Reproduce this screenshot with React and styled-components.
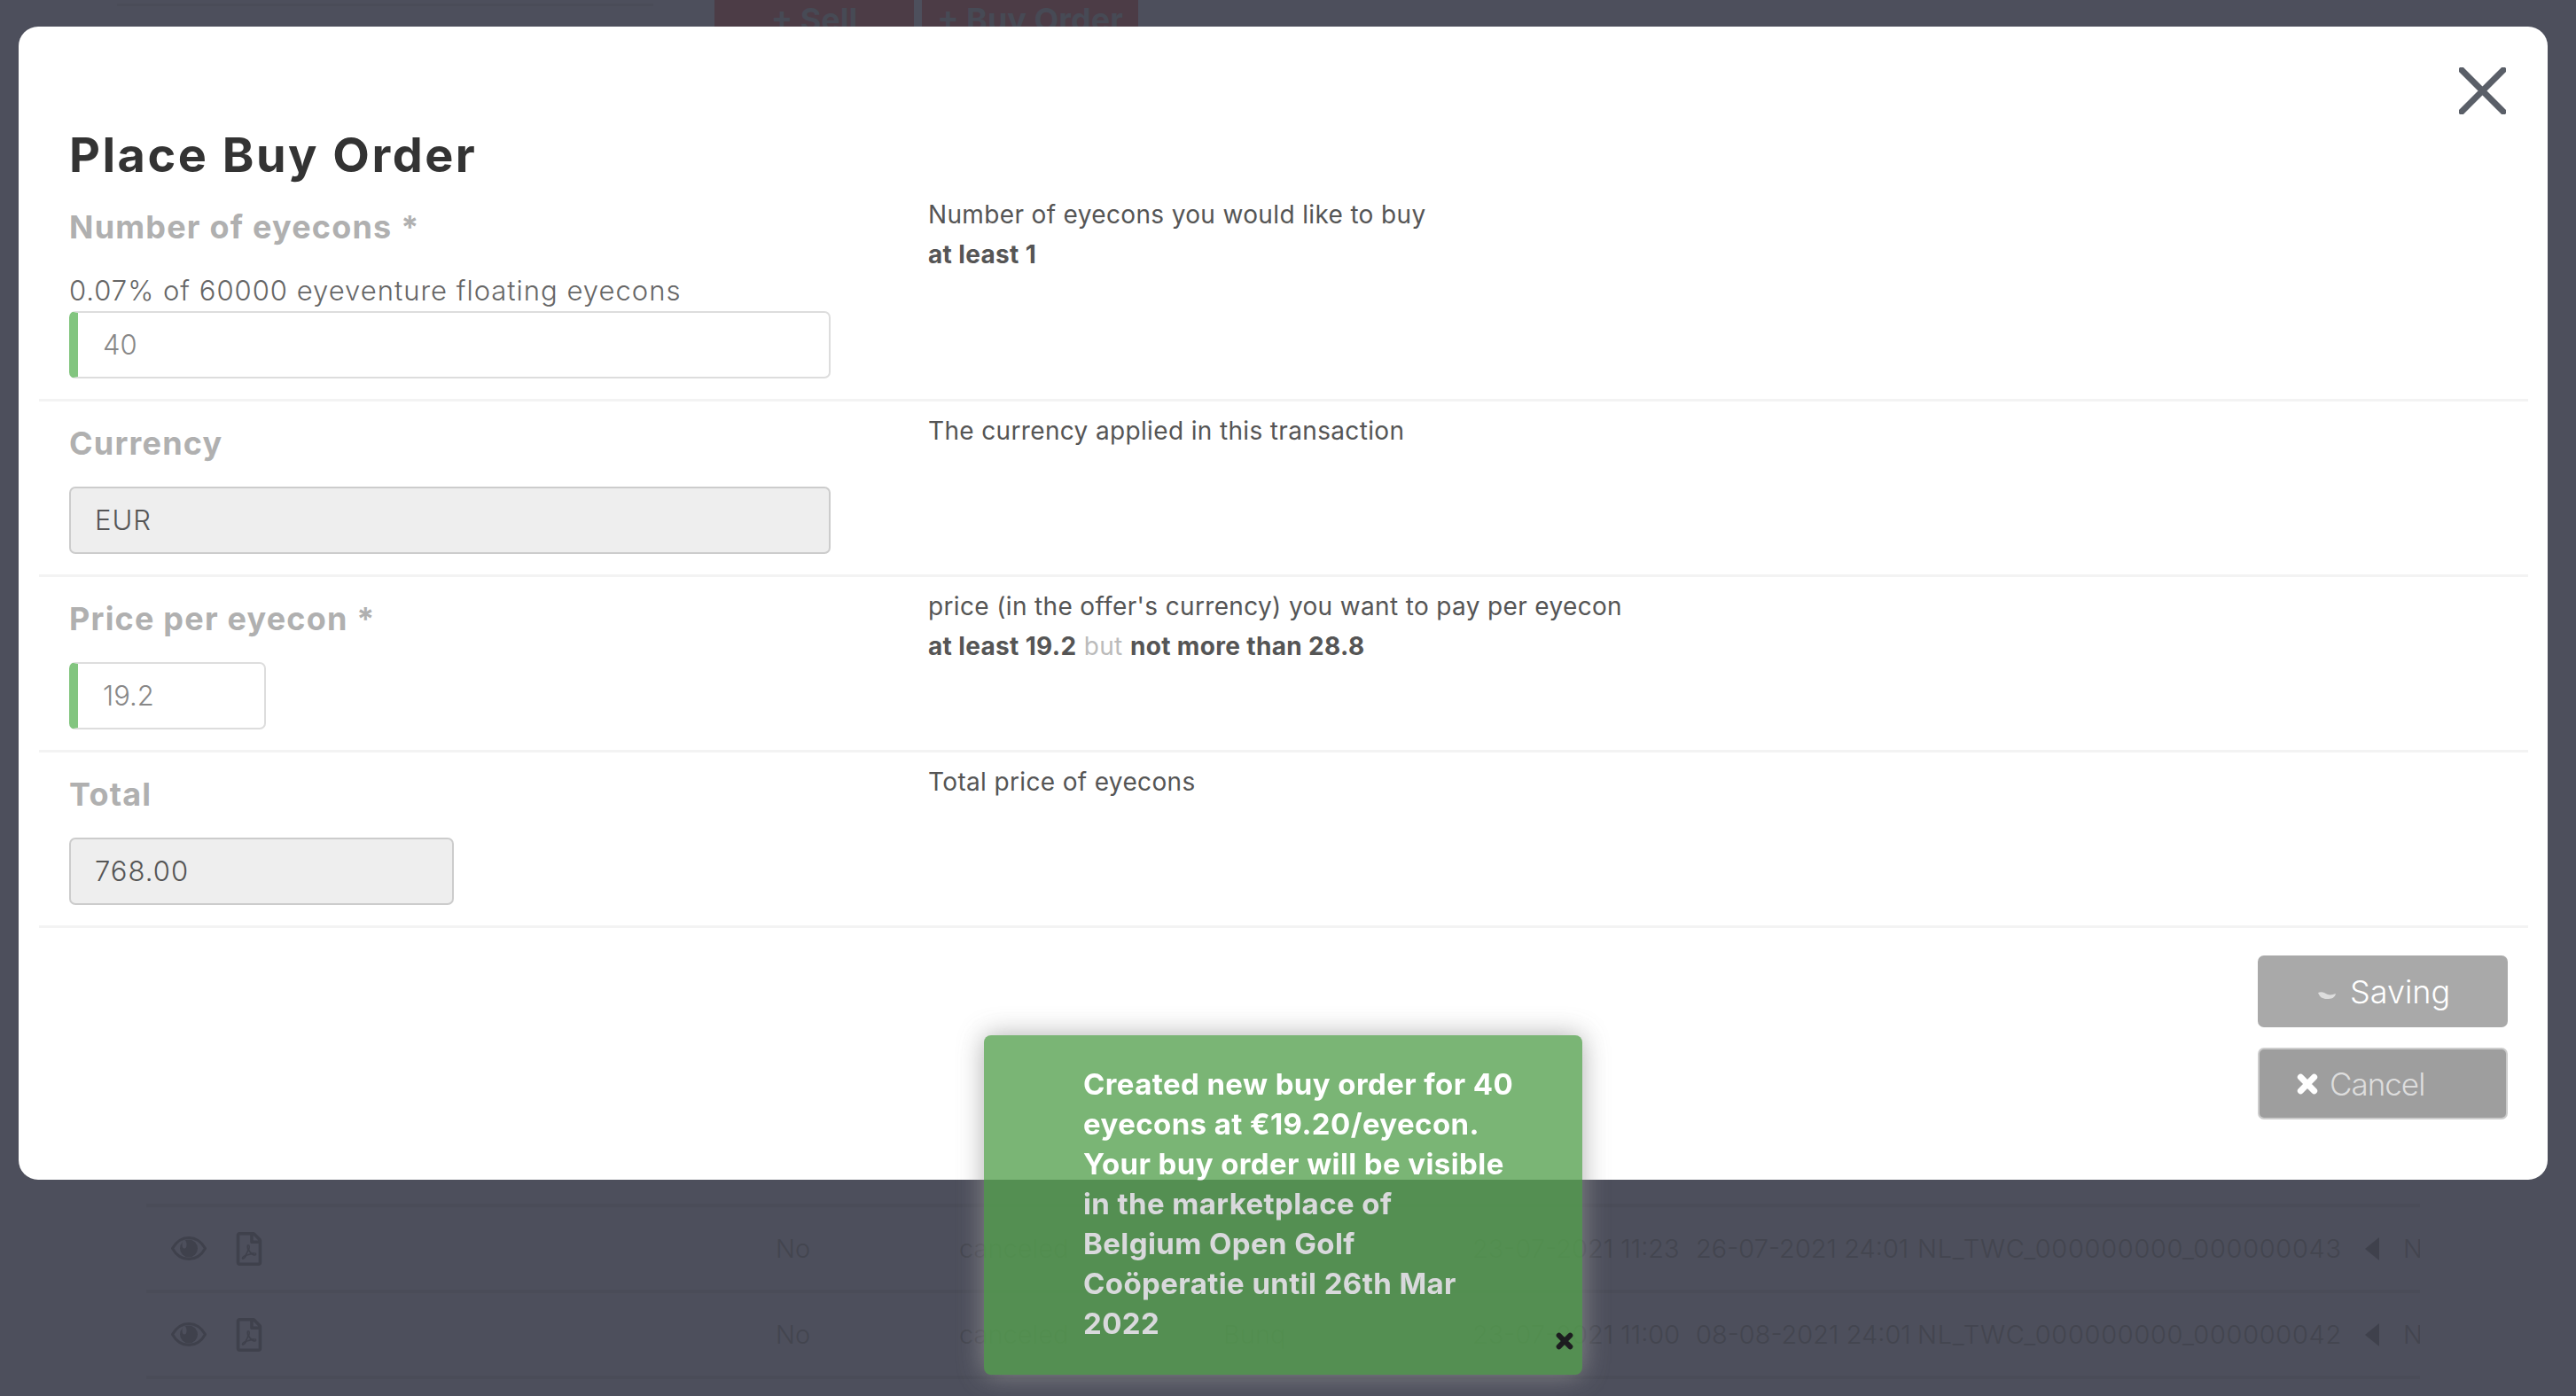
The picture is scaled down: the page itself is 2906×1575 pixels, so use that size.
import styled, { createGlobalStyle } from "styled-components";
import { FaRegFilePdf } from "react-icons/fa";

const GlobalStyle = createGlobalStyle`
  html, body {
    margin: 0;
    padding: 0;
    background: #4d4f5c;
  }
  body {
    font-family: "Inter", "Liberation Sans", sans-serif;
  }
`;

const orders = [
  {
    id: 43,
    payment: "",
    created: "23-07-2021 11:23",
    expires: "26-07-2021 24:01",
    reference: "NL_TWC_000000000_000000043",
  },
  {
    id: 42,
    payment: "Bunq",
    created: "23-07-2021 11:00",
    expires: "08-08-2021 24:01",
    reference: "NL_TWC_000000000_000000042",
  },
];

const EyeIcon = () => (
  <EyeSvg viewBox="0 0 40 27">
    <path
      d="M1.5 13.5C6 5.5 12.500 1.500 20 1.500S34 5.500 38.500 13.500C34 21.500 27.500 25.500 20 25.500S6 21.500 1.500 13.500Z"
      fill="none"
      stroke="#3f414c"
      strokeWidth="3"
    />
    <circle cx="20" cy="13.500" r="10" fill="#3f414c" />
    <ellipse cx="15" cy="9" rx="2.500" ry="4.500" fill="#4d4f5c" />
  </EyeSvg>
);

const CrossIcon = ({ size, color }) => (
  <svg width={size} height={size} viewBox="0 0 22 22">
    <path
      d="M4 4L18 18M18 4L4 18"
      stroke={color}
      strokeWidth="6.500"
      strokeLinecap="round"
    />
  </svg>
);

const App = () => {
  return (
    <>
      <GlobalStyle />
      <Page>
        <TopBar>
          <TopRule />
          <TopButton $width={225}>+ Sell</TopButton>
          <TopButton $width={244}>+ Buy Order</TopButton>
        </TopBar>
        <OrderTable>
          {orders.map((order) => (
            <OrderRow key={order.id}>
              <IconCell>
                <EyeIcon />
                <FaRegFilePdf size={38} color="#3f414c" />
              </IconCell>
              <OrderCell>No</OrderCell>
              <OrderCell>canceled</OrderCell>
              <OrderCell>{order.payment}</OrderCell>
              <OrderCell>{order.created}</OrderCell>
              <OrderCell>{order.expires}</OrderCell>
              <ReferenceCell>{order.reference}</ReferenceCell>
              <Caret />
              <OrderCell>N</OrderCell>
            </OrderRow>
          ))}
        </OrderTable>
      </Page>

      <Modal>
        <CloseButton>
          <svg width="53" height="53" viewBox="0 0 53 53">
            <path
              d="M3 3L50 50M50 3L3 50"
              stroke="#5a5f68"
              strokeWidth="7"
              strokeLinecap="square"
            />
          </svg>
        </CloseButton>
        <Title>Place Buy Order</Title>

        <FormRow>
          <FieldColumn>
            <FieldLabel>Number of eyecons *</FieldLabel>
            <FieldNote>0.07% of 60000 eyeventure floating eyecons</FieldNote>
            <ValidInput $width={859}>40</ValidInput>
          </FieldColumn>
          <HintColumn>
            <div>Number of eyecons you would like to buy</div>
            <strong>at least 1</strong>
          </HintColumn>
        </FormRow>

        <FormRow>
          <FieldColumn>
            <FieldLabel>Currency</FieldLabel>
            <ReadonlyInput $width={859}>EUR</ReadonlyInput>
          </FieldColumn>
          <HintColumn>
            <div>The currency applied in this transaction</div>
          </HintColumn>
        </FormRow>

        <FormRow>
          <FieldColumn>
            <FieldLabel>Price per eyecon *</FieldLabel>
            <ValidInput $width={222}>19.2</ValidInput>
          </FieldColumn>
          <HintColumn>
            <div>price (in the offer's currency) you want to pay per eyecon</div>
            <div>
              <strong>at least 19.2</strong> <Muted>but</Muted>{" "}
              <strong>not more than 28.8</strong>
            </div>
          </HintColumn>
        </FormRow>

        <FormRow>
          <FieldColumn>
            <FieldLabel>Total</FieldLabel>
            <ReadonlyInput $width={434}>768.00</ReadonlyInput>
          </FieldColumn>
          <HintColumn>
            <div>Total price of eyecons</div>
          </HintColumn>
        </FormRow>

        <Footer>
          <SaveButton>
            <Spinner width="20" height="10" viewBox="0 0 20 10">
              <path
                d="M0 2C5 0 8 3 11 4C14 5 17 4 20 3C19 8 15 9 10 9C5 9 2 7 0 2Z"
                fill="#dddddd"
              />
            </Spinner>
            Saving
          </SaveButton>
          <CancelButton>
            <CrossIcon size={24} color="#ffffff" />
            Cancel
          </CancelButton>
        </Footer>
      </Modal>

      <Toast>
        <ToastLine>Created new buy order for 40</ToastLine>
        <ToastLine>eyecons at €19.20/eyecon.</ToastLine>
        <ToastLine>Your buy order will be visible</ToastLine>
        <ToastLine>in the marketplace of</ToastLine>
        <ToastLine>Belgium Open Golf</ToastLine>
        <ToastLine>Coöperatie until 26th Mar</ToastLine>
        <ToastLine>2022</ToastLine>
        <ToastClose>
          <CrossIcon size={20} color="#111111" />
        </ToastClose>
      </Toast>
    </>
  );
};

const Page = styled.div`
  height: 1575px;
  overflow: hidden;
  background: #4d4f5c;
`;

const TopBar = styled.div`
  display: flex;
  align-items: flex-start;
  gap: 9px;
  height: 1358px;
  padding-left: 132px;
  box-sizing: border-box;
`;

const TopRule = styled.div`
  width: 605px;
  height: 3px;
  margin: 4px 60px 0 0;
  background: #4a4c58;
`;

const TopButton = styled.div`
  width: ${({ $width }) => $width}px;
  height: 60px;
  background: #4c3c46;
  color: #474a55;
  font-size: 36px;
  font-weight: 700;
  line-height: 44px;
  text-align: center;
`;

const OrderTable = styled.div`
  margin-left: 165px;
  width: 2565px;
  border-top: 4px solid #4a4c58;
`;

const OrderRow = styled.div`
  display: grid;
  grid-template-columns: 710px 207px 298px 281px 252px 250px 505px 43px 19px;
  align-items: center;
  height: 93px;
  overflow: hidden;
  border-bottom: 4px solid #4a4c58;
  color: #43454f;
  font-size: 29px;
  font-weight: 300;
`;

const IconCell = styled.div`
  display: flex;
  align-items: center;
  gap: 29px;
  padding-left: 28px;
`;

const EyeSvg = styled.svg`
  width: 40px;
  height: 27px;
`;

const OrderCell = styled.div`
  white-space: nowrap;
`;

const ReferenceCell = styled(OrderCell)`
  letter-spacing: 0.7px;
`;

const Caret = styled.div`
  width: 0;
  height: 0;
  border-top: 13px solid transparent;
  border-bottom: 13px solid transparent;
  border-right: 16px solid #3f414c;
`;

const Modal = styled.div`
  position: fixed;
  top: 30px;
  left: 21px;
  width: 2853px;
  box-sizing: border-box;
  padding: 115px 22px 68px 23px;
  background: #ffffff;
  border-radius: 22px;
`;

const CloseButton = styled.div`
  position: absolute;
  top: 46px;
  right: 47px;
  width: 53px;
  height: 53px;
`;

const Title = styled.h1`
  margin: 0 0 4px 34px;
  color: #333333;
  font-size: 54px;
  font-weight: 700;
  letter-spacing: 2.5px;
  line-height: 60px;
`;

const FormRow = styled.div`
  display: grid;
  grid-template-columns: 1003px 1fr;
  box-sizing: border-box;
  min-height: 198px;
  border-bottom: 3px solid #f3f3f3;
`;

const FieldColumn = styled.div`
  padding: 22px 0 23px 34px;
`;

const FieldLabel = styled.div`
  margin-bottom: 24px;
  color: #b0b0b0;
  font-size: 36px;
  font-weight: 700;
  letter-spacing: 1.2px;
  line-height: 50px;
`;

const FieldNote = styled.div`
  margin: 27px 0 3px;
  color: #666666;
  font-size: 31px;
  font-weight: 300;
  letter-spacing: 1px;
  line-height: 40px;
`;

const InputBase = styled.div`
  box-sizing: border-box;
  width: ${({ $width }) => $width}px;
  height: 76px;
  border: 2px solid #dddddd;
  border-radius: 7px;
  font-size: 31px;
  font-weight: 300;
  line-height: 72px;
`;

const ValidInput = styled(InputBase)`
  padding-left: 28px;
  border-left: 10px solid #82c57f;
  color: #888888;
`;

const ReadonlyInput = styled(InputBase)`
  padding-left: 27px;
  border-color: #cccccc;
  background: #eeeeee;
  color: #555555;
  letter-spacing: 1px;
`;

const HintColumn = styled.div`
  padding-top: 11px;
  color: #555555;
  font-size: 28px;
  line-height: 45px;
  letter-spacing: 0.35px;

  strong {
    font-weight: 700;
  }
`;

const Muted = styled.span`
  color: #bbbbbb;
`;

const Footer = styled.div`
  display: flex;
  flex-direction: column;
  align-items: flex-end;
  gap: 23px;
  padding: 31px 23px 0 0;
`;

const FooterButton = styled.div`
  display: flex;
  align-items: center;
  box-sizing: border-box;
  width: 282px;
  height: 81px;
  border-radius: 7px;
  font-size: 36px;
  font-weight: 300;
`;

const SaveButton = styled(FooterButton)`
  gap: 16px;
  padding: 0 0 0 68px;
  background: #a9a9a9;
  color: #ffffff;
`;

const Spinner = styled.svg`
  margin-top: 8px;
`;

const CancelButton = styled(FooterButton)`
  gap: 13px;
  padding-left: 42px;
  border: 2px solid #cccccc;
  background: #9e9e9e;
  color: #dddddd;
  font-size: 35px;
  letter-spacing: -1px;
`;

const Toast = styled.div`
  position: fixed;
  top: 1168px;
  left: 1110px;
  width: 675px;
  height: 383px;
  box-sizing: border-box;
  padding: 33px 0 0 112px;
  background: #57a150;
  border-radius: 8px;
  box-shadow: 0 0 30px #999999;
  color: #ffffff;
  font-size: 33px;
  font-weight: 700;
  letter-spacing: 0.4px;
  line-height: 45px;
  opacity: 0.79;
`;

const ToastLine = styled.div`
  white-space: nowrap;
`;

const ToastClose = styled.div`
  position: absolute;
  right: 10px;
  bottom: 28px;
  display: flex;
`;

export default App;
